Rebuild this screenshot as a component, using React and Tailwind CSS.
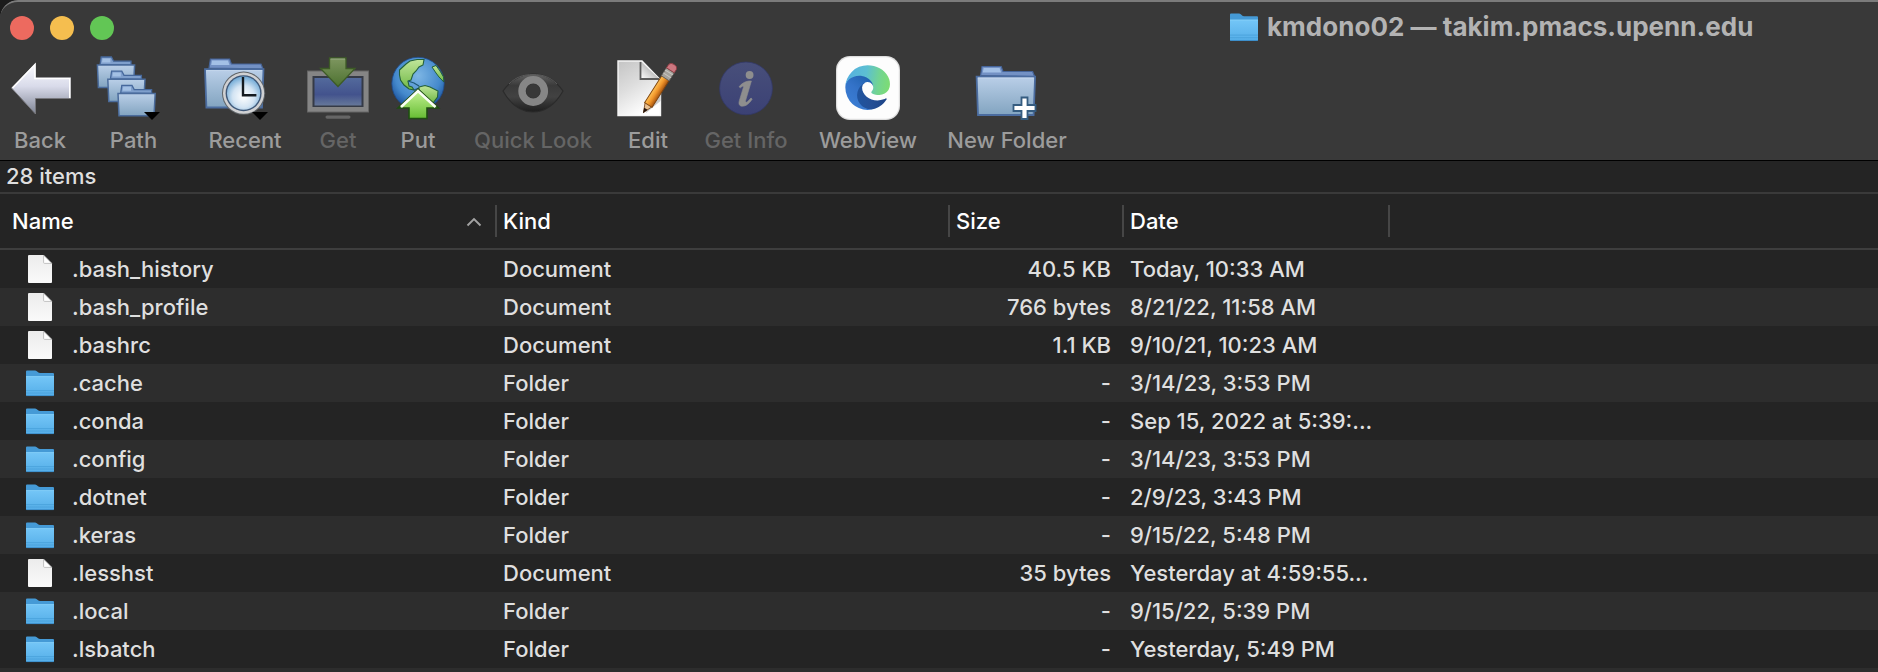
import React from "react";

function BackIcon() {
  return (
    <svg width="64" height="64" viewBox="0 0 64 64">
      <defs>
        <linearGradient id="back" x1="0" y1="0" x2="0" y2="1">
          <stop offset="0" stopColor="#fbfbff" />
          <stop offset="0.45" stopColor="#d9dbea" />
          <stop offset="1" stopColor="#7e8494" />
        </linearGradient>
      </defs>
      <path d="M3.5 32 L27.5 7.5 V21.5 H62.5 V42.5 H27.5 V58 Z" fill="url(#back)" stroke="#77777c" strokeWidth="1" />
      <path d="M4.5 32 L27 8.5 V22.5 H61.8 V42" fill="none" stroke="#ffffff" strokeWidth="1.6" />
    </svg>
  );
}

function BlueDefs({ id }) {
  return (
    <defs>
      <linearGradient id={id} x1="0" y1="0" x2="0" y2="1">
        <stop offset="0" stopColor="#bacfe8" />
        <stop offset="1" stopColor="#82a4c0" />
      </linearGradient>
    </defs>
  );
}

function SmallFolder({ x, y }) {
  return (
    <g transform={`translate(${x} ${y})`}>
      <path d="M3.5 8.5 L4.6 1 H14.8 L17 5.2 H34.4 V9 Z" fill="#7f9fcc" stroke="#46689c" strokeWidth="1.3" />
      <path d="M6 2.4h7.8v4H5.4z" fill="#a3c0e4" />
      <path d="M0.8 9 H38 L36.8 31.4 H1.8 Z" fill="url(#pathFill)" stroke="#4b6c9c" strokeWidth="1.5" />
    </g>
  );
}

function PathIcon() {
  return (
    <svg width="64" height="64" viewBox="0 0 64 64">
      <BlueDefs id="pathFill" />
      <SmallFolder x={0.6} y={0} />
      <SmallFolder x={11} y={14.2} />
      <SmallFolder x={21.2} y={28.4} />
      <path d="M48 56 H64 L56 64 Z" fill="#000" />
    </svg>
  );
}

function BigFolder({ fill }) {
  return (
    <g>
      <path d="M5 12 L6.4 3 H25.6 L27.4 8 H57 L59 13 Z" fill="#7391c4" stroke="#46659a" strokeWidth="1.2" />
      <path d="M8 4.5 H24 L25.5 9 H7.2 Z" fill="#a3c0e6" />
      <path d="M1 13.2 H59.5 L58 51.5 H2.4 Z" fill={fill} stroke="#4b6c9f" strokeWidth="1.8" />
      <path d="M2.5 14.6 H58" stroke="#c4d6ec" strokeWidth="1" />
    </g>
  );
}

function RecentIcon() {
  return (
    <svg width="64" height="64" viewBox="0 0 64 64">
      <BlueDefs id="recentFill" />
      <defs>
        <radialGradient id="clock" cx="0.5" cy="0.6" r="0.6">
          <stop offset="0" stopColor="#ffffff" />
          <stop offset="0.55" stopColor="#d3e4f3" />
          <stop offset="1" stopColor="#6fa9d6" />
        </radialGradient>
      </defs>
      <BigFolder fill="url(#recentFill)" />
      <circle cx="39.6" cy="37.2" r="21.6" fill="#5f6468" />
      <circle cx="39.6" cy="37.2" r="20.6" fill="#d0d1d3" />
      <circle cx="39.6" cy="37.2" r="18" fill="#3f5878" />
      <circle cx="39.6" cy="37.2" r="16.6" fill="url(#clock)" />
      <path d="M39 21 V39.3 H52.4" fill="none" stroke="#141a20" strokeWidth="2.4" />
      <path d="M48 56 H64 L56 64 Z" fill="#000" />
    </svg>
  );
}

function GetIcon() {
  return (
    <svg width="64" height="64" viewBox="0 0 64 64">
      <defs>
        <linearGradient id="screen" x1="0" y1="0" x2="0" y2="1">
          <stop offset="0" stopColor="#536a9c" />
          <stop offset="0.6" stopColor="#43538d" />
          <stop offset="1" stopColor="#66789a" />
        </linearGradient>
        <linearGradient id="getArrow" x1="0" y1="0" x2="0" y2="1">
          <stop offset="0" stopColor="#7e9660" />
          <stop offset="1" stopColor="#4d7230" />
        </linearGradient>
      </defs>
      <rect x="1.5" y="15" width="61" height="41" fill="#858585" stroke="#666" strokeWidth="1" />
      <rect x="6.5" y="20" width="51" height="31" fill="#353a46" />
      <rect x="8.5" y="22" width="47" height="27.5" fill="url(#screen)" />
      <rect x="19.5" y="59.5" width="25" height="3.2" rx="1.6" fill="#666" />
      <path d="M23.5 2 H40 V12.5 H49 L32 30.5 L14.5 12.5 H23.5 Z" fill="url(#getArrow)" stroke="#3d5b26" strokeWidth="1.3" />
      <path d="M24.6 3 H39" stroke="#9aab88" strokeWidth="1" />
    </svg>
  );
}

function PutIcon() {
  return (
    <svg width="64" height="64" viewBox="0 0 64 64">
      <defs>
        <radialGradient id="sea" cx="0.5" cy="0.35" r="0.62">
          <stop offset="0" stopColor="#7db6e4" />
          <stop offset="0.7" stopColor="#4489cc" />
          <stop offset="1" stopColor="#1f569f" />
        </radialGradient>
        <linearGradient id="land" x1="0" y1="0" x2="0" y2="1">
          <stop offset="0" stopColor="#c0e59a" />
          <stop offset="1" stopColor="#6fb844" />
        </linearGradient>
        <linearGradient id="putArrow" x1="0" y1="0" x2="0" y2="1">
          <stop offset="0" stopColor="#c9f598" />
          <stop offset="1" stopColor="#66bd33" />
        </linearGradient>
      </defs>
      <circle cx="32" cy="27.5" r="26.2" fill="url(#sea)" stroke="#1d4a8c" strokeWidth="0.8" />
      <path d="M13.5 14 L20 8 L24 5 L31 3.5 L38 3.5 L37 9 L33 11 L30 15 L27 18 L25 24 L22 25 L23 30 L26 31 L28 34 L23 33 L18 29 L14.5 24 L13.5 19 Z" fill="url(#land)" stroke="#24603a" strokeWidth="1.1" />
      <path d="M46 11 L50 9.5 L54 15 L57.5 21 L57.8 26 L53 21 L50 17 Z" fill="url(#land)" stroke="#24603a" strokeWidth="1" />
      <path d="M33 31 L39 29.5 L44 31 L52 35 L51.5 41 L47 47 L42 44 L37 38 L33 34 Z" fill="url(#land)" stroke="#24603a" strokeWidth="1.1" />
      <path d="M22 25 L28 27 L33 30 M28 34 L33 32" fill="none" stroke="#1f5876" strokeWidth="1.3" />
      <path d="M32 33 L52.5 52 H41 V62.5 H23 V52 H12 Z" fill="url(#putArrow)" stroke="#1f4d12" strokeWidth="1.6" />
      <path d="M15 51 L32 35 L49.5 51" fill="none" stroke="#fbfff6" strokeWidth="2.6" />
    </svg>
  );
}

function EyeIcon() {
  return (
    <svg width="64" height="64" viewBox="0 0 64 64">
      <defs>
        <linearGradient id="eye" x1="0" y1="0" x2="0" y2="1">
          <stop offset="0" stopColor="#626262" />
          <stop offset="0.3" stopColor="#3a3a3a" />
          <stop offset="0.6" stopColor="#424242" />
          <stop offset="1" stopColor="#1e1e1e" />
        </linearGradient>
      </defs>
      <path d="M2 35 C9 25 18 18 32 18 C46 18 55 25 62 35 C54 49 44 56 32 56 C20 56 10 49 2 35 Z" fill="url(#eye)" stroke="#2b2b2b" strokeWidth="1.2" />
      <path d="M8 28 C15 21 22 18.5 32 18.5 C42 18.5 49 21 56 28" fill="none" stroke="#5a5a5a" strokeWidth="1" />
      <circle cx="32.2" cy="35" r="11.2" fill="#353535" stroke="#868686" strokeWidth="7.4" />
      <circle cx="32.2" cy="35" r="7" fill="#383838" />
    </svg>
  );
}

function EditIcon() {
  return (
    <svg width="64" height="64" viewBox="0 0 64 64" className="overflow-visible">
      <defs>
        <linearGradient id="sheet" x1="0" y1="0" x2="0.5" y2="1">
          <stop offset="0" stopColor="#c4c4c4" />
          <stop offset="0.5" stopColor="#dedede" />
          <stop offset="1" stopColor="#ffffff" />
        </linearGradient>
        <linearGradient id="fold" x1="0" y1="1" x2="0.8" y2="0.2">
          <stop offset="0" stopColor="#ffffff" />
          <stop offset="1" stopColor="#9f9f9f" />
        </linearGradient>
        <linearGradient id="pencil" x1="0" y1="0" x2="1" y2="0">
          <stop offset="0" stopColor="#ffc257" />
          <stop offset="0.5" stopColor="#f0952a" />
          <stop offset="1" stopColor="#a85510" />
        </linearGradient>
      </defs>
      <path d="M2 5 H26 L44.5 24 V59.5 H2 Z" fill="url(#sheet)" stroke="#f5f5f5" strokeWidth="1.4" />
      <path d="M24.5 5.5 V23 H43.5 Z" fill="url(#fold)" />
      <path d="M24.5 6 V23 H43" fill="none" stroke="#5c5c5c" strokeWidth="1.8" />
      <path d="M44.5 32 V45 L30 57 L30 53 Z" fill="#9a9a9a" opacity="0.5" />
      <g transform="translate(27.5 56.5) rotate(32.5)">
        <path d="M0 0 L-4.3 -10 H4.3 Z" fill="#e9c193" stroke="#7b4a20" strokeWidth="0.8" />
        <path d="M0 1 L-2 -4.4 H2 Z" fill="#24140c" />
        <rect x="-4.4" y="-41" width="8.8" height="32" fill="url(#pencil)" stroke="#7c430f" strokeWidth="0.9" />
        <rect x="-4.6" y="-50" width="9.2" height="9.5" fill="#a5a29c" stroke="#65625e" strokeWidth="0.8" />
        <path d="M-4.6 -47.5h9.2M-4.6 -44h9.2" stroke="#c8c6c2" strokeWidth="1" />
        <path d="M-4.6 -50 V-54 Q-4 -57 0 -57 Q4.4 -57 4.6 -54 V-50 Z" fill="#cc7780" stroke="#8e3c42" strokeWidth="0.8" />
      </g>
    </svg>
  );
}

function InfoIcon() {
  return (
    <svg width="64" height="64" viewBox="0 0 64 64">
      <defs>
        <linearGradient id="info" x1="0" y1="0" x2="0" y2="1">
          <stop offset="0" stopColor="#484f7a" />
          <stop offset="1" stopColor="#3b4175" />
        </linearGradient>
      </defs>
      <circle cx="32" cy="32.4" r="26.4" fill="url(#info)" stroke="#323968" strokeWidth="0.8" />
      <circle cx="35.6" cy="19" r="3.9" fill="#8e8e8e" />
      <path d="M25 30.8 C28 27 31 25.6 35 25 H37.4 L31.6 44.6 C31.2 46.4 32.3 46.7 33.6 45.6 L37 42 L38.2 43 C35.4 47.6 32 50.2 28.4 50.2 C25 50.2 24.4 47.6 25.4 44.4 L29.4 31.4 C29.8 29.8 28.6 29.6 26.4 31.8 Z" fill="#8e8e8e" stroke="#8e8e8e" strokeWidth="0.6" />
    </svg>
  );
}

function EdgeIcon() {
  return (
    <svg width="64" height="64" viewBox="0 0 64 64">
      <defs>
        <linearGradient id="e1" x1="63" y1="178" x2="241" y2="178" gradientUnits="userSpaceOnUse">
          <stop offset="0" stopColor="#1f55a0" />
          <stop offset="0.5" stopColor="#244f96" />
          <stop offset="1" stopColor="#1d4487" />
        </linearGradient>
        <linearGradient id="e2" x1="150" y1="100" x2="45" y2="230" gradientUnits="userSpaceOnUse">
          <stop offset="0" stopColor="#2364b2" />
          <stop offset="0.5" stopColor="#3473c9" />
          <stop offset="1" stopColor="#3a7cd2" />
        </linearGradient>
        <linearGradient id="e3" x1="5" y1="70" x2="258" y2="110" gradientUnits="userSpaceOnUse">
          <stop offset="0" stopColor="#55afe0" />
          <stop offset="0.45" stopColor="#5cbfd2" />
          <stop offset="0.75" stopColor="#72d492" />
          <stop offset="1" stopColor="#7ddc74" />
        </linearGradient>
      </defs>
      <rect x="0" y="0" width="64" height="64" rx="14" fill="#dedede" />
      <rect x="1.2" y="1.2" width="61.6" height="61.6" rx="13" fill="#fdfdfd" />
      <g transform="translate(9.3 9.2) scale(0.1745) translate(-4.63 -4.92)">
        <path fill="url(#e1)" d="M235.68 195.46a93.73 93.73 0 0 1-10.54 4.71 101.87 101.87 0 0 1-35.9 6.46c-47.32 0-88.54-32.55-88.54-74.32A31.48 31.48 0 0 1 117.13 105c-42.8 1.8-53.8 46.4-53.8 72.53 0 73.88 68.09 81.37 82.76 81.37 7.91 0 19.84-2.3 27-4.56l1.31-.44a128.34 128.34 0 0 0 66.6-52.8 4 4 0 0 0-5.32-5.64Z" />
        <path fill="url(#e2)" d="M110.34 246.34A79.2 79.2 0 0 1 87.6 225a80.72 80.72 0 0 1 29.53-120c3.12-1.47 8.45-4.13 15.54-4a32.35 32.35 0 0 1 25.69 13 31.88 31.88 0 0 1 6.36 18.66c0-.21 24.46-79.6-80-79.6-43.9 0-80 41.66-80 78.21a130.15 130.15 0 0 0 12.11 56 128 128 0 0 0 156.38 67.11 75.55 75.55 0 0 1-62.78-8Z" />
        <path fill="url(#e3)" d="M156.94 153.78c-.81 1.05-3.3 2.5-3.3 5.66 0 2.61 1.7 5.12 4.72 7.23 14.38 10 41.49 8.68 41.56 8.68a59.56 59.56 0 0 0 30.27-8.35 61.38 61.38 0 0 0 30.43-52.88c.26-22.41-8-37.31-11.34-43.91C228.09 28.76 182.35 4.92 132.61 4.92a128 128 0 0 0-128 126.2c.48-36.54 36.8-66.05 80-66.05 3.5 0 23.46.34 42 10.07 16.34 8.58 24.9 18.94 30.85 29.21 6.18 10.67 7.28 24.15 7.28 29.52s-2.74 13.33-7.8 19.91Z" />
      </g>
    </svg>
  );
}

function NewFolderIcon() {
  return (
    <svg width="64" height="64" viewBox="0 0 64 64">
      <BlueDefs id="newFill" />
      <g transform="translate(0.6 7.5)">
        <BigFolder fill="url(#newFill)" />
      </g>
      <path d="M46.5 41.5 H52.5 V49 H60.5 V55 H52.5 V63 H46.5 V55 H38.5 V49 H46.5 Z" fill="#fff" stroke="#355c80" strokeWidth="1.8" />
    </svg>
  );
}

function FolderGlyph({ className }) {
  return (
    <svg className={className} viewBox="0 0 28 27" preserveAspectRatio="none">
      <defs>
        <linearGradient id="fg" x1="0" y1="0" x2="0" y2="1">
          <stop offset="0" stopColor="#74c6f7" />
          <stop offset="1" stopColor="#55aee8" />
        </linearGradient>
      </defs>
      <path d="M0 1.4 Q0 0.4 1 0.4 H9 Q10 0.4 10.8 1.2 L12.4 2.6 Q13 3 14 3 H27 Q28 3 28 4 V10 H0 Z" fill="#459ad6" />
      <path d="M0 6.3 H28 V25 Q28 26 27 26 H1 Q0 26 0 25 Z" fill="url(#fg)" />
      <path d="M0 6.6 H28" stroke="#8ad2fa" strokeWidth="0.7" />
      <path d="M0 20.6 H28 M0 23 H28" stroke="#479fd9" strokeWidth="0.8" />
      <path d="M0.3 25.6 H27.7" stroke="#3b8cc8" strokeWidth="0.9" />
    </svg>
  );
}

function DocumentGlyph() {
  return (
    <svg className="h-7 w-7" viewBox="0 0 28 28">
      <defs>
        <linearGradient id="dg" x1="0" y1="0" x2="0" y2="1">
          <stop offset="0" stopColor="#ececec" />
          <stop offset="1" stopColor="#fafafa" />
        </linearGradient>
      </defs>
      <path d="M2 1 Q2 0 3 0 H17.6 L26 8.4 V27 Q26 28 25 28 H3 Q2 28 2 27 Z" fill="url(#dg)" />
      <path d="M17.6 0.2 V7.4 Q17.6 8.4 18.6 8.4 H25.8 Z" fill="#fff" stroke="#b4b4b4" strokeWidth="0.8" />
    </svg>
  );
}

const tools = [
  { label: "Back", icon: BackIcon, box: "ml-2 w-16 items-center" },
  { label: "Path", icon: PathIcon, box: "ml-6 w-[75px] items-start" },
  { label: "Recent", icon: RecentIcon, box: "ml-[33px] w-[82px] items-start" },
  { label: "Get", icon: GetIcon, box: "ml-5 w-16 items-center", off: true },
  { label: "Put", icon: PutIcon, box: "ml-4 w-16 items-center" },
  { label: "Quick Look", icon: EyeIcon, box: "ml-[23px] w-[120px] items-center", off: true },
  { label: "Edit", icon: EditIcon, box: "ml-[23px] w-16 items-center" },
  { label: "Get Info", icon: InfoIcon, box: "ml-[22px] w-[88px] items-center", off: true },
  { label: "WebView", icon: EdgeIcon, box: "ml-[28px] w-[100px] items-center" },
  { label: "New Folder", icon: NewFolderIcon, box: "ml-[27px] w-[124px] items-center" },
];

const files = [
  [".bash_history", "Document", "40.5 KB", "Today, 10:33 AM"],
  [".bash_profile", "Document", "766 bytes", "8/21/22, 11:58 AM"],
  [".bashrc", "Document", "1.1 KB", "9/10/21, 10:23 AM"],
  [".cache", "Folder", "-", "3/14/23, 3:53 PM"],
  [".conda", "Folder", "-", "Sep 15, 2022 at 5:39:..."],
  [".config", "Folder", "-", "3/14/23, 3:53 PM"],
  [".dotnet", "Folder", "-", "2/9/23, 3:43 PM"],
  [".keras", "Folder", "-", "9/15/22, 5:48 PM"],
  [".lesshst", "Document", "35 bytes", "Yesterday at 4:59:55..."],
  [".local", "Folder", "-", "9/15/22, 5:39 PM"],
  [".lsbatch", "Folder", "-", "Yesterday, 5:49 PM"],
];

function HeaderCell({ label, className, children }) {
  return (
    <div className={`flex h-8 items-center justify-between border-r-2 border-[#464646] ${className}`}>
      <span className="pt-px">{label}</span>
      {children}
    </div>
  );
}

export default function App() {
  return (
    <div className="h-[672px] w-[1878px] overflow-hidden bg-[#1c1c1c] font-['Inter',sans-serif] text-[22px] font-[450] whitespace-nowrap text-[#dfdfdf]">
      <div className="flex h-full flex-col overflow-hidden rounded-tl-[18px] bg-[#242424]">
        <header className="h-[161px] shrink-0 rounded-tl-[18px] border-t-2 border-b border-t-[#7b7b7b] border-b-black bg-[#393939]">
          <div className="flex h-[54px] items-start">
            <div className="flex gap-4 pt-3.5 pl-2.5">
              <span className="size-6 rounded-full bg-[#ed6a5f]" />
              <span className="size-6 rounded-full bg-[#f5be4f]" />
              <span className="size-6 rounded-full bg-[#62c655]" />
            </div>
            <div className="ml-[1116px] flex items-center pt-[5px]">
              <FolderGlyph className="h-[29px] w-7" />
              <span className="ml-[9px] text-[26px] leading-[40px] font-bold tracking-[0.02px] text-[#b3b3b3]">
                kmdono02 — takim.pmacs.upenn.edu
              </span>
            </div>
          </div>
          <div className="flex">
            {tools.map(({ label, icon: Icon, box, off }) => (
              <div key={label} className={`flex shrink-0 flex-col ${box}`}>
                <Icon />
                <span className={`mt-[5px] self-center leading-[30px] ${off ? "text-[#656565]" : "text-[#9c9c9c]"}`}>{label}</span>
              </div>
            ))}
          </div>
        </header>
        <div className="h-[33px] shrink-0 border-b-2 border-[#3a3a3a] pl-1.5 leading-[31px]">28 items</div>
        <div className="flex h-14 shrink-0 items-center border-b-2 border-[#3e3e3e] font-medium text-white">
          <HeaderCell label="Name" className="w-[497px] pl-3">
            <svg width="16" height="10" viewBox="0 0 16 10" className="mt-0.5 mr-[13px]">
              <path d="M1.5 8.5 L8 2 L14.5 8.5" fill="none" stroke="#a3a3a3" strokeWidth="1.9" />
            </svg>
          </HeaderCell>
          <HeaderCell label="Kind" className="w-[453px] pl-1.5" />
          <HeaderCell label="Size" className="w-[174px] pl-1.5" />
          <HeaderCell label="Date" className="w-[266px] pl-1.5" />
        </div>
        {files.map(([name, kind, size, date], i) => (
          <div key={name} className={`flex h-[38px] shrink-0 items-center leading-[38px] ${i % 2 ? "bg-[#2d2d2d]" : "bg-[#242424]"}`}>
            <div className="flex w-[503px] items-center pl-[26px]">
              {kind === "Folder" ? <FolderGlyph className="h-[27px] w-7" /> : <DocumentGlyph />}
              <span className="ml-[18px] pt-px leading-[37px]">{name}</span>
            </div>
            <div className="w-[453px] pt-px leading-[37px]">{kind}</div>
            <div className="w-[155px] pt-px text-right leading-[37px]">{size}</div>
            <div className="ml-[19px] pt-px leading-[37px]">{date}</div>
          </div>
        ))}
        <div className="h-1 bg-[#2d2d2d]" />
      </div>
    </div>
  );
}
